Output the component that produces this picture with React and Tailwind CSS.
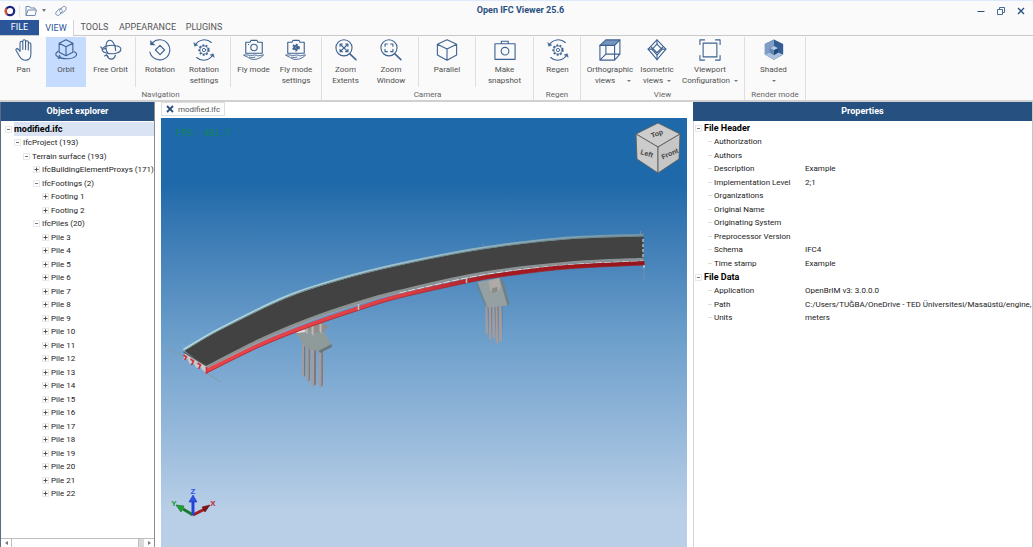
import React from 'react';

const curve = (pts, move = true) => {
  let d = `${move ? 'M' : 'L'}${pts[0][0]} ${pts[0][1]}`;
  for (let i = 0; i < pts.length - 1; i++) {
    const p0 = pts[i - 1] || pts[i];
    const p1 = pts[i];
    const p2 = pts[i + 1];
    const p3 = pts[i + 2] || p2;
    d += ` C${p1[0] + (p2[0] - p0[0]) / 6} ${p1[1] + (p2[1] - p0[1]) / 6} ${p2[0] - (p3[0] - p1[0]) / 6} ${p2[1] - (p3[1] - p1[1]) / 6} ${p2[0]} ${p2[1]}`;
  }
  return d;
};

const Icon = ({ children }) => (
  <svg viewBox="0 0 24 24" className="block size-[22px] shrink-0" fill="none" stroke="#3d6291" strokeWidth="1.2" strokeLinecap="round" strokeLinejoin="round" aria-hidden="true">
    {children}
  </svg>
);

const Gear = ({ r = 4, solid = false }) => (
  <g>
    <circle cx="12" cy="12" r={r + 0.8} strokeWidth="1.8" strokeDasharray="2 1.75" strokeLinecap="butt" />
    <circle cx="12" cy="12" r={r} fill={solid ? '#3d6291' : 'none'} strokeWidth="1" />
    <circle cx="12" cy="12" r={r * 0.4} fill={solid ? '#fafafa' : 'none'} strokeWidth="1" />
  </g>
);

const Arrows = () => (
  <g>
    <path d="M2.5 6.500A11.500 11.500 0 0 1 20 3.800M21.500 17.500A11.500 11.500 0 0 1 4 20.200" />
    <path d="M.8 4.200 1.800 8l3.400-1.200zM23.200 19.800 22.200 16l-3.400 1.200z" fill="#3d6291" strokeWidth=".4" />
  </g>
);

const Camera = ({ children }) => (
  <g>
    <path d="M3 3.500h4.700l1-2h6.600l1 2H21v12H3z" />
    {children}
    <path d="M1 17.500c3-1 6.500 1 9.500.3s5.500-.2 5.500.8c2-.4 4.500-1.200 6.500-1.200-2 2.200-5 4.400-9.500 4.800-3 .2-5-.2-7-1.800M7 19.800c2 .5 4 .5 6 0M1 17.800l4 2" strokeWidth="1" />
  </g>
);

const Lens = ({ children }) => (
  <g>
    <circle cx="9.8" cy="9.6" r="8.8" />
    <path d="m16.200 16.200 6.600 6.300" strokeWidth="1.6" />
    {children}
  </g>
);

const icons = {
  pan: (
    <path d="M5.500 14.500V5.600c0-2 2.800-2 2.800 0V12 3.600c0-2.200 3-2.200 3 0V11.500 2.500c0-2.200 3-2.200 3 0v9V4c0-2 3-2 3 0v9.500l1.800-2.300c1.300-1.500 3.400-.4 2.500 1.300l-3.800 6.600c-1.600 2.700-3.500 4.100-6.300 4.100-4 0-6-2.700-6-6.500z" transform="matrix(-1 0 0 1 25 0)" />
  ),
  orbit: (
    <g>
      <path d="m12 .8 7.500 3.800v9.800L12 18.200l-7.500-3.800V4.600zM4.500 4.600 12 8.400l7.500-3.800M12 8.400v9.800" />
      <path d="M3.500 13.300c-7 4.200 1 8.600 10.500 8.200 9.500-.5 12-5.500 7-7.700" />
      <path d="m4.600 17.800 1.600 2.400-2.800 1" />
    </g>
  ),
  free: (
    <g>
      <path d="M17.500 7.500C14 6 5.500 7.300 3 10c-3.600 4.300 7.400 7.200 14.500 5.500 7-1.700 6.700-6.800 1-7.900" />
      <path d="M9.500 16C5.200 13.500 5.800 3 9.600 1.600 14-.1 17 7.500 17 12.500M7.500 18c2.600 5.800 7.800 4.800 9.300-.3" />
      <path d="m.8 8.600 2.100 2.600 3.400-1M5 18.500l2.200-1.400 1.500 2.400" />
    </g>
  ),
  rotation: (
    <g>
      <path d="M3.600 4.300a11 11 0 1 1-2.600 10M12 7l5 5-5 5-5-5z" />
      <path d="M1.600 1.900v4.600h4.700z" fill="#3d6291" strokeWidth=".5" />
    </g>
  ),
  gearArrows: (
    <g>
      <Gear r={4.5} />
      <Arrows />
    </g>
  ),
  fly: (
    <Camera>
      <circle cx="12" cy="9.3" r="3.5" />
      <path d="M6 6h.3" />
    </Camera>
  ),
  flySettings: (
    <Camera>
      <g transform="translate(0 -2.700)">
        <Gear r={2.5} solid />
      </g>
    </Camera>
  ),
  extents: (
    <Lens>
      <path d="m6 6 7.600 7.400M13.600 6 6 13.400M5.500 8V5.500H8M11.600 5.500h2.500V8M5.500 11.300v2.500H8M11.600 13.800h2.500v-2.500" />
    </Lens>
  ),
  window: (
    <Lens>
      <path d="M5.500 8V5.500H8M11.600 5.500h2.500V8M5.500 11.300v2.500H8M11.600 13.800h2.500v-2.500" />
    </Lens>
  ),
  parallel: <path d="m12 .8 10.500 5v11.700L12 23.200 1.500 17.500V5.800zM1.500 5.800 12 10.800l10.500-5M12 10.800v12.400" />,
  snapshot: (
    <g>
      <path d="M1 5.200h22v17H1zM8 5V2.500h7.500V5" />
      <circle cx="12" cy="13.3" r="4.2" />
    </g>
  ),
  ortho: (
    <g>
      <path d="M1 7 7.500 1h15.300L17 7z" fill="#7595c0" />
      <path d="M1 7v16h16V7M22.800 1v15.500L17 23M7.500 7v9.500h15.300M7.500 16.500 1 23" />
    </g>
  ),
  iso: (
    <g>
      <path d="m12 1 9.700 10L12 22.500 2.300 11z" />
      <path d="m12 5.500 5.500 5.700-5.500 6-5.500-6z" />
      <path d="M12 1v4.500M2.300 11h4.200M21.700 11h-4.200M12 17.200v5.300M5.500 8.500 12 15l6.500-6.500" />
    </g>
  ),
  viewport: (
    <g>
      <path d="M4.500 4.500h15v15h-15z" />
      <path d="M1 6V1h5M18 1h5v5M1 18v5h5M18 23h5v-5" />
    </g>
  ),
  shaded: (
    <g stroke="none">
      <path d="m12 .5 10 5V17l-10 5.500L2 17V5.500z" fill="#335d92" />
      <path d="M12 .5V8L7.500 9.700v5.100L2 17V5.500z" fill="#7f9cc4" />
      <path d="m2 17 5.500-2.200 4.500 2.700 4.500-2.700L22 17l-10 5.500z" fill="#a9c0df" />
      <path d="M12 7.500 16.500 10 12 12.400 7.500 10z" fill="#b4c9e6" />
      <path d="M7.500 10 12 12.400v5.100l-4.500-2.700z" fill="#6386b5" />
      <path d="m12 12.400 4.500-2.400v4.800L12 17.500z" fill="#234b7d" />
    </g>
  ),
};

const groups = [
  {
    name: 'Navigation',
    sections: [
      [
        { icon: 'pan', lines: ['Pan'], w: 'w-[45px]' },
        { icon: 'orbit', lines: ['Orbit'], w: 'w-[40px]', active: true },
        { icon: 'free', lines: ['Free Orbit'], w: 'w-[49px]' },
      ],
      [
        { icon: 'rotation', lines: ['Rotation'], w: 'w-[48px]' },
        { icon: 'gearArrows', lines: ['Rotation', 'settings'], w: 'w-[40px] mr-[6px]' },
      ],
      [
        { icon: 'fly', lines: ['Fly mode'], w: 'w-[45px]' },
        { icon: 'flySettings', lines: ['Fly mode', 'settings'], w: 'w-[40px] mr-[5px]' },
      ],
    ],
  },
  {
    name: 'Camera',
    sections: [
      [
        { icon: 'extents', lines: ['Zoom', 'Extents'], w: 'w-[45px]' },
        { icon: 'window', lines: ['Zoom', 'Window'], w: 'w-[46px] mr-[4px]' },
      ],
      [{ icon: 'parallel', lines: ['Parallel'], w: 'w-[56px]' }],
      [{ icon: 'snapshot', lines: ['Make', 'snapshot'], w: 'w-[57px]' }],
    ],
  },
  { name: 'Regen', sections: [[{ icon: 'gearArrows', lines: ['Regen'], w: 'w-[45px]' }]] },
  {
    name: 'View',
    sections: [
      [
        { icon: 'ortho', lines: ['Orthographic', 'views'], w: 'w-[56px]', menu: true, wide: true },
        { icon: 'iso', lines: ['Isometric', 'views'], w: 'w-[38px]', menu: true },
        { icon: 'viewport', lines: ['Viewport', 'Configuration'], w: 'w-[68px]', menu: true },
      ],
    ],
  },
  { name: 'Render mode', sections: [[{ icon: 'shaded', lines: ['Shaded', ''], w: 'w-[55px] mr-[4px]', menu: true }]] },
];

const Caret = () => <span className="inline-block border-x-2 border-t-2 border-x-transparent border-t-[#777]" />;

function Tool({ tool }) {
  return (
    <button type="button" aria-pressed={tool.active} className={`flex h-[50px] flex-col items-center whitespace-nowrap pt-[2px] ${tool.w} ${tool.active ? 'bg-[#c5dbff]' : ''}`}>
      <Icon>{icons[tool.icon]}</Icon>
      <span className="pt-[3px]">{tool.lines[0]}</span>
      {tool.lines.length > 1 && (
        <span className={`flex items-center ${tool.wide ? 'gap-3 pl-[6px]' : tool.lines[1] ? 'gap-1' : 'h-[11px]'}`}>
          {tool.lines[1] && <span>{tool.lines[1]}</span>}
          {tool.menu && <Caret />}
        </span>
      )}
    </button>
  );
}

const indents = ['pl-[4px]', 'pl-[13px]', 'pl-[22px]', 'pl-[32px]', 'pl-[41px]'];

const tree = [
  [0, 'modified.ifc', true],
  [1, 'IfcProject (193)', true],
  [2, 'Terrain surface (193)', true],
  [3, 'IfcBuildingElementProxys (171)', false],
  [3, 'IfcFootings (2)', true],
  [4, 'Footing 1', false],
  [4, 'Footing 2', false],
  [3, 'IfcPiles (20)', true],
  ...Array.from({ length: 20 }, (_, i) => [4, `Pile ${i + 3}`, false]),
];

const properties = [
  {
    name: 'File Header',
    rows: [
      ['Authorization', ''],
      ['Authors', ''],
      ['Description', 'Example'],
      ['Implementation Level', '2;1'],
      ['Organizations', ''],
      ['Original Name', ''],
      ['Originating System', ''],
      ['Preprocessor Version', ''],
      ['Schema', 'IFC4'],
      ['Time stamp', 'Example'],
    ],
  },
  {
    name: 'File Data',
    rows: [
      ['Application', 'OpenBrIM v3: 3.0.0.0'],
      ['Path', 'C:/Users/TUĞBA/OneDrive - TED Üniversitesi/Masaüstü/engine,'],
      ['Units', 'meters'],
    ],
  },
];

const Expander = ({ open }) => (
  <svg viewBox="0 0 7 7" className="block size-[7px] shrink-0" aria-hidden="true">
    <rect x=".5" y=".5" width="6" height="6" fill="#fff" stroke="#e8e8e8" />
    <path d={open ? 'M2 3.500h3' : 'M1.500 3.500h4M3.500 1.500v4'} stroke={open ? '#777' : '#555'} />
  </svg>
);

const outer = [[184, 350], [220, 329], [286, 297], [340, 279], [400, 264], [483, 248], [567, 238], [644, 235]];
const inner = [[207, 367], [260, 340], [310, 319], [360, 302], [400, 291], [483, 273], [567, 263], [644, 259]];
const girder = [[207, 371], [260, 345], [310, 325], [360, 308], [400, 296], [467, 281], [500, 275], [567, 267], [645, 263]];
const shift = (pts, dx, dy) => pts.map(([x, y]) => [x + dx, y + dy]);

function Scene() {
  return (
    <svg viewBox="162 118 525 429" preserveAspectRatio="xMidYMid meet" className="block h-full w-full" role="img" aria-label="Bridge model">
      <defs>
        <linearGradient id="redGirder" x1="0" x2="1">
          <stop offset="0" stopColor="#e8444a" />
          <stop offset=".45" stopColor="#dc4046" />
          <stop offset=".65" stopColor="#a91a20" />
          <stop offset="1" stopColor="#94141a" />
        </linearGradient>
        <linearGradient id="kerb" x1="0" x2="1">
          <stop offset="0" stopColor="#b5dce3" />
          <stop offset=".5" stopColor="#9bbfcc" />
          <stop offset="1" stopColor="#7595a2" />
        </linearGradient>
      </defs>

      <g stroke="#8c9296" strokeWidth=".7">
        <path d="M168 349 184 356M206 373l16 9M641 231v8M644.500 262v18M483 244l2 3" />
      </g>

      <g fill="#a39c9e">
        <path d="M302.500 330h3v44l-1 3-2-2zM307 332h3v47l-1 3-2-2zM311.500 332h4.500v52l-2 3-2.500-3zM319 330h4v55l-2 3-2-3z" />
        <path d="M486 304h2.500v31l-2.500-2zM489.500 304h2.500v37l-2.500-2zM493 304h2.500v34l-2.500-1zM496 304h2.500v40l-2.500-1zM499.500 304h3v36l-1.500 2-1.500-1z" />
      </g>
      <g fill="#716f76">
        <path d="M304.700 336h1v39l-1 2zM309.200 338h1v42l-1 2zM314.800 338h1.500v46l-1.500 2zM322 336h1.200v49l-1.200 2z" />
        <path d="M488 304h.8v31zM491.500 304h.8v37zM495 304h.8v34zM498 304h.8v40zM502 304h.8v36z" />
      </g>
      <path d="m295 331 26-5 11 18-13 7-13-3z" fill="#8f9a9b" />
      <path d="m319 351 13-7 .5 3-12 6z" fill="#6c7578" />
      <path d="m294 330 10-3 2 5-8 1z" fill="#e0e1dc" />
      <path d="m306 326 15-5 10 8-5-1-2 4-12 1z" fill="#8f8e8c" />
      <path d="M306 326h2v8l-2-2zM312 324h2v12l-2-2zM320 324h2v10l-2-3z" fill="#c1b9b5" />
      <path d="m478 282 22-4 10 27-22 3z" fill="#94a0a1" />
      <path d="m478 282 1 5 9 21-2-2-8-18zM500 278l4 4 6 22-2 2z" fill="#747f82" />
      <path d="m489 281 11-3 1 10-3 5-7-1z" fill="#adaaa7" />
      <path d="m493 288 5-1v5l-6 1z" fill="#8a8a89" />

      <path d={`${curve(outer)} ${curve([...inner].reverse(), false)} Z`} fill="#424242" />
      <path d={curve(outer)} fill="none" stroke="url(#kerb)" strokeWidth="2.500" />
      <path d={curve(shift(outer, 0, 1))} fill="none" stroke="#6f8990" strokeWidth="1" />
      <path d={curve(inner)} fill="none" stroke="#8c9292" strokeWidth="2.500" />
      <path d={curve(shift(inner, 0, 2))} fill="none" stroke="#a59fa0" strokeWidth="1" />
      <path d={curve(shift(inner.slice(4), 0, 2))} fill="none" stroke="#e0dbd3" strokeWidth="1" strokeDasharray="7 2" />
      <path d={curve(girder)} fill="none" stroke="url(#redGirder)" strokeWidth="4" />
      <path d={curve(shift(girder, 0, 2))} fill="none" stroke="#9e2630" strokeWidth=".7" />
      <path d="M359 304v6M467 278v5" stroke="#bac1cb" strokeWidth="1.500" />
      <path d="M643.500 239v20M644.500 265v3" stroke="#c9d6d8" strokeWidth="1.200" strokeDasharray="3 2" />
      <path d="m185 353 22 13v7l-4-3-2-3-4 1-3-5-4 1-2-5-4 1z" fill="#c8c7ca" />
      <g fill="none" stroke="#cf303b" strokeWidth="1.600">
        <path d="m184 355 3 2-2 3M191 359l3 2-2 4M198 363l3 2-2 4M207 367v7" />
      </g>
      <path d="m184 352 23 14" stroke="#555" strokeWidth="1.200" />
    </svg>
  );
}

function ViewCube() {
  return (
    <svg viewBox="0 0 46 52" className="absolute right-[6px] top-[4px] block h-[52px] w-[46px]" role="img" aria-label="View cube">
      <g stroke="#5f5f5f" strokeWidth=".9" strokeLinejoin="round">
        <path d="m23 1 22 11-22 13L1 12z" fill="#cdcdcd" />
        <path d="m1 12 22 13v26L2 37z" fill="#cbcbcb" />
        <path d="m45 12-22 13v26l21-14z" fill="#c6c6c6" />
      </g>
      <g fontSize="7" fontWeight="700" fill="#444" textAnchor="middle" className="font-['Liberation_Sans',sans-serif]">
        <text x="22" y="14" transform="rotate(-20 22 12)">Top</text>
        <text x="12" y="34" transform="rotate(16 12 31)">Left</text>
        <text x="35" y="34" transform="rotate(-24 35 32)">Front</text>
      </g>
    </svg>
  );
}

function Axes() {
  return (
    <svg viewBox="0 0 46 30" className="absolute bottom-[29px] left-[10px] block h-[30px] w-[46px] overflow-visible" role="img" aria-label="Axes">
      <path d="m22 27-10-6" stroke="#167d26" strokeWidth="3" />
      <path d="m5 17 8 1-3 6z" fill="#18a52d" stroke="#14661e" strokeWidth=".6" />
      <path d="m22 27 12-6" stroke="#a01b22" strokeWidth="3" />
      <path d="m39 17-5 7-3-5z" fill="#7c1116" stroke="#6a1014" strokeWidth=".6" />
      <path d="M22 27V13" stroke="#2342d8" strokeWidth="3" />
      <path d="m22 7-4 7h8z" fill="#2c50e8" stroke="#1d35ac" strokeWidth=".6" />
      <g fontSize="8" fontWeight="700" textAnchor="middle" className="font-['Liberation_Sans',sans-serif]">
        <text x="22" y="6" fill="#2f55ea">Z</text>
        <text x="3" y="18" fill="#1a9f2c">Y</text>
        <text x="42" y="18" fill="#c4262e">X</text>
      </g>
    </svg>
  );
}

const PanelTitle = ({ children }) => (
  <h2 className="flex h-[19px] shrink-0 items-center justify-center bg-[#25507f] text-[9px] font-bold text-white">{children}</h2>
);

export default function App() {
  return (
    <div className="flex h-screen flex-col overflow-hidden bg-white font-['Roboto','Noto_Sans',sans-serif] text-[8px] leading-[11px] text-[#222]">
      <header className="shrink-0 border-t border-[#dcebfb] bg-[#fafafa]">
        <div className="grid h-[19px] grid-cols-[1fr_auto_1fr] items-center">
          <div className="flex items-center pl-[4px]">
            <svg viewBox="0 0 12 12" className="block size-3" aria-label="Open IFC Viewer" role="img">
              <circle cx="6" cy="6" r="4.200" fill="none" stroke="#1d2385" strokeWidth="2.200" />
              <path d="M2.500 3.500a4.200 4.200 0 0 0 .8 6" fill="none" stroke="#e8502f" strokeWidth="2.200" />
            </svg>
            <span className="ml-[3px] h-[12px] w-px bg-[#e5e5e5]" />
            <button type="button" aria-label="Open file" className="ml-[5px]">
              <svg viewBox="0 0 12 12" className="block size-3" fill="none" stroke="#6f8bb0">
                <path d="M1 10.500V1.500h3.500l1 1.500H10v2M1 10.500l2-5.500h8.500l-1.500 5.500z" />
              </svg>
            </button>
            <button type="button" aria-label="Recent files" className="ml-[5px] flex h-3 items-center">
              <span className="border-x-2 border-t-[3px] border-x-transparent border-t-[#777]" />
            </button>
            <button type="button" aria-label="Attach" className="ml-[9px]">
              <svg viewBox="0 0 12 12" className="block size-3" fill="none" stroke="#6f8bb0" strokeLinecap="round">
                <path d="M4.500 5.500 7.500 2c2-1.800 5 .5 3.200 2.800L8.500 7.300C7.200 8.500 5.500 8 5 7" />
                <path d="M7.500 6 4.500 9.800c-2 1.800-5-.5-3.200-2.800L3.500 4.500C4.800 3.300 6.500 3.800 7 4.800" />
              </svg>
            </button>
          </div>
          <h1 className="pl-[8px] text-[9px] font-bold text-[#29507f]">Open IFC Viewer 25.6</h1>
          <div className="flex items-center justify-end gap-[12px] pr-[8px]">
            <button type="button" aria-label="Minimize">
              <svg viewBox="0 0 8 8" className="block size-2" stroke="#29507f"><path d="M.5 4.500h7" /></svg>
            </button>
            <button type="button" aria-label="Restore">
              <svg viewBox="0 0 8 8" className="block size-2" fill="none" stroke="#4c6d97"><path d="M.5 2.500h5v5h-5zM2.500 2.500v-2h5v5h-2" /></svg>
            </button>
            <button type="button" aria-label="Close">
              <svg viewBox="0 0 8 8" className="block size-2" stroke="#29507f" strokeWidth="1.400"><path d="m1 1 6 6M7 1 1 7" /></svg>
            </button>
          </div>
        </div>
        <nav className="flex h-[16px] items-stretch border-b border-[#c9c9c9] text-[9px] text-[#555]">
          <button type="button" className="w-[39px] bg-[#2a5699] text-white">FILE</button>
          <button type="button" aria-current="page" className="-mb-px w-[35px] border-r border-[#d5d5d5] bg-white text-[#2a5699]">VIEW</button>
          <button type="button" className="w-[41px]">TOOLS</button>
          <button type="button" className="w-[65px]">APPEARANCE</button>
          <button type="button" className="w-[48px]">PLUGINS</button>
        </nav>
        <div className="flex border-b-2 border-[#d0d0d0] text-[#505050]">
          {groups.map((group) => (
            <section key={group.name} aria-label={group.name} className="mt-px border-r border-[#dedede]">
              <div className="flex">
                {group.sections.map((tools, i) => (
                  <div key={i} className="flex border-l border-[#dedede] first:border-l-0 first:pl-px">
                    {tools.map((tool, j) => (
                      <Tool key={j} tool={tool} />
                    ))}
                  </div>
                ))}
              </div>
              <p className="pt-[2px] text-center text-[#666]">{group.name}</p>
            </section>
          ))}
        </div>
      </header>

      <div className="flex min-h-0 flex-1 border-l border-[#5b6b80]">
        <aside className="flex w-[154px] shrink-0 flex-col border-r border-[#8c8c8c]">
          <PanelTitle>Object explorer</PanelTitle>
          <ul className="min-h-0 flex-1 overflow-hidden pt-px">
            {tree.map(([level, label, open]) => (
              <li key={label} className="flex odd:h-[14px] even:h-[13px]">
                <button type="button" aria-expanded={open} className={`flex w-full items-center gap-[2px] whitespace-nowrap text-left ${indents[level]}`}>
                  <Expander open={open} />
                  <span className={level === 0 ? 'flex h-full flex-1 items-center bg-[#d9e3f3] text-[9px] font-bold text-black' : ''}>{label}</span>
                </button>
              </li>
            ))}
          </ul>
          <div className="flex h-[9px] shrink-0 items-stretch border-t border-[#bdbdbd] bg-[#d9d9d9]">
            <button type="button" aria-label="Scroll left" className="flex w-[10px] items-center justify-center bg-white">
              <span className="border-y-2 border-r-[3px] border-y-transparent border-r-[#777]" />
            </button>
            <div className="mr-[5px] flex-1 border-x border-[#bdbdbd] bg-white" />
            <button type="button" aria-label="Scroll right" className="flex w-[10px] items-center justify-center bg-white">
              <span className="border-y-2 border-l-[3px] border-y-transparent border-l-[#777]" />
            </button>
          </div>
        </aside>

        <main className="flex min-w-0 flex-1 flex-col px-[6px]">
          <div className="flex h-[16px] shrink-0 items-start">
            <div className="flex h-[14px] items-center gap-[4px] border border-[#dedede] bg-[#fdfdfd] px-[4px]">
              <button type="button" aria-label="Close modified.ifc">
                <svg viewBox="0 0 8 8" className="block size-2" stroke="#29507f" strokeWidth="1.800"><path d="m1 1 6 6M7 1 1 7" /></svg>
              </button>
              <span className="text-[#555]">modified.ifc</span>
            </div>
          </div>
          <div className="relative min-h-0 flex-1 bg-linear-to-b from-[#1d69a9] from-15% via-[#6a9dca] via-50% to-[#b9cfe7] to-92%">
            <Scene />
            <p className="absolute left-[15px] top-[10px] font-['DejaVu_Sans_Mono',monospace] text-[9px] text-[#148558]">FPS: 481.7</p>
            <ViewCube />
            <Axes />
          </div>
        </main>

        <aside className="flex w-[340px] shrink-0 flex-col border-r border-[#c4c4c4]">
          <PanelTitle>Properties</PanelTitle>
          <div className="min-h-0 flex-1 overflow-hidden border-l border-[#d5d5d5]">
            <table className="w-full table-fixed border-collapse leading-[13px]">
              <colgroup>
                <col className="w-[111px]" />
                <col />
              </colgroup>
              {properties.map((group) => (
                <tbody key={group.name}>
                  <tr className="h-[14px]">
                    <th colSpan="2" scope="rowgroup" className="p-0 text-left text-[9px] font-bold text-black">
                      <button type="button" aria-expanded="true" className="flex items-center gap-[2px] pl-px">
                        <Expander open />
                        {group.name}
                      </button>
                    </th>
                  </tr>
                  {group.rows.map(([label, value]) => (
                    <tr key={label} className="odd:h-[14px] even:h-[13px]">
                      <th scope="row" className="py-0 pl-[14px] pr-0 text-left font-normal">
                        <span className="flex items-center gap-[2px] whitespace-nowrap before:h-px before:w-[4px] before:bg-[#dcdcdc]">{label}</span>
                      </th>
                      <td className="overflow-hidden whitespace-nowrap p-0">{value}</td>
                    </tr>
                  ))}
                </tbody>
              ))}
            </table>
          </div>
        </aside>
      </div>
    </div>
  );
}
